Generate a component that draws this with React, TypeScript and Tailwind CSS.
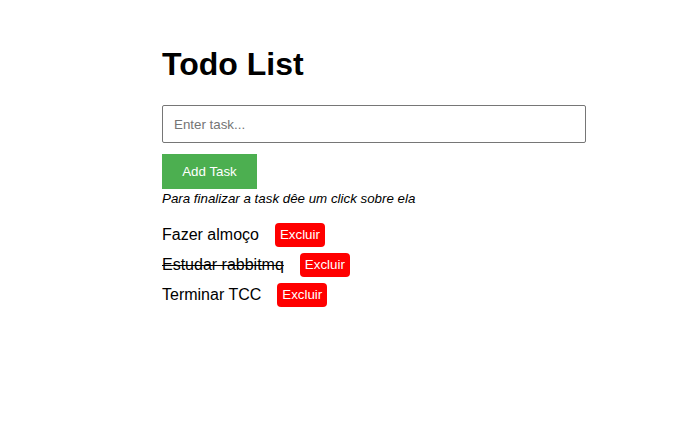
import React, { useState } from 'react';

type Task = { id: number; text: string; done: boolean };

const initialTasks: Task[] = [
  { id: 1, text: 'Fazer almoço', done: false },
  { id: 2, text: 'Estudar rabbitmq', done: true },
  { id: 3, text: 'Terminar TCC', done: false },
];

export default function App() {
  const [tasks, setTasks] = useState<Task[]>(initialTasks);
  const [value, setValue] = useState('');

  const addTask = () => {
    if (!value.trim()) return;
    setTasks(prev => [...prev, { id: Date.now(), text: value.trim(), done: false }]);
    setValue('');
  };

  const toggle = (id: number) =>
    setTasks(prev => prev.map(t => (t.id === id ? { ...t, done: !t.done } : t)));

  const remove = (id: number) => setTasks(prev => prev.filter(t => t.id !== id));

  return (
    <div className="min-h-[432px] w-[700px] bg-white font-['Liberation_Sans',Arial,sans-serif] text-black">
      <div className="ml-[162px] w-[424px] pt-[46px]">
        <h1 className="text-[32px] font-bold leading-[37px]">Todo List</h1>

        <input
          className="mt-[22px] block h-[38px] w-full rounded-[2px] border border-[#767676] px-[11px] text-[13.333px] placeholder:text-[#757575] outline-none"
          placeholder="Enter task..."
          value={value}
          onChange={e => setValue(e.target.value)}
        />

        <button
          className="mt-[11px] block h-[35px] w-[95px] bg-[#4caf50] text-[13.333px] text-white"
          onClick={addTask}
        >
          Add Task
        </button>

        <p className="text-[13.333px] italic leading-[19px]">Para finalizar a task dêe um click sobre ela</p>

        <ul className="mt-[15px] flex flex-col gap-[6px]">
          {tasks.map(task => (
            <li key={task.id} className="flex h-[24px] items-center gap-4">
              <span
                className={`cursor-pointer text-[16px] ${task.done ? 'line-through' : ''}`}
                onClick={() => toggle(task.id)}
              >
                {task.text}
              </span>
              <button
                className="h-[24px] w-[50px] rounded-[4px] bg-[#ff0000] text-[13.333px] text-white"
                onClick={() => remove(task.id)}
              >
                Excluir
              </button>
            </li>
          ))}
        </ul>
      </div>
    </div>
  );
}
